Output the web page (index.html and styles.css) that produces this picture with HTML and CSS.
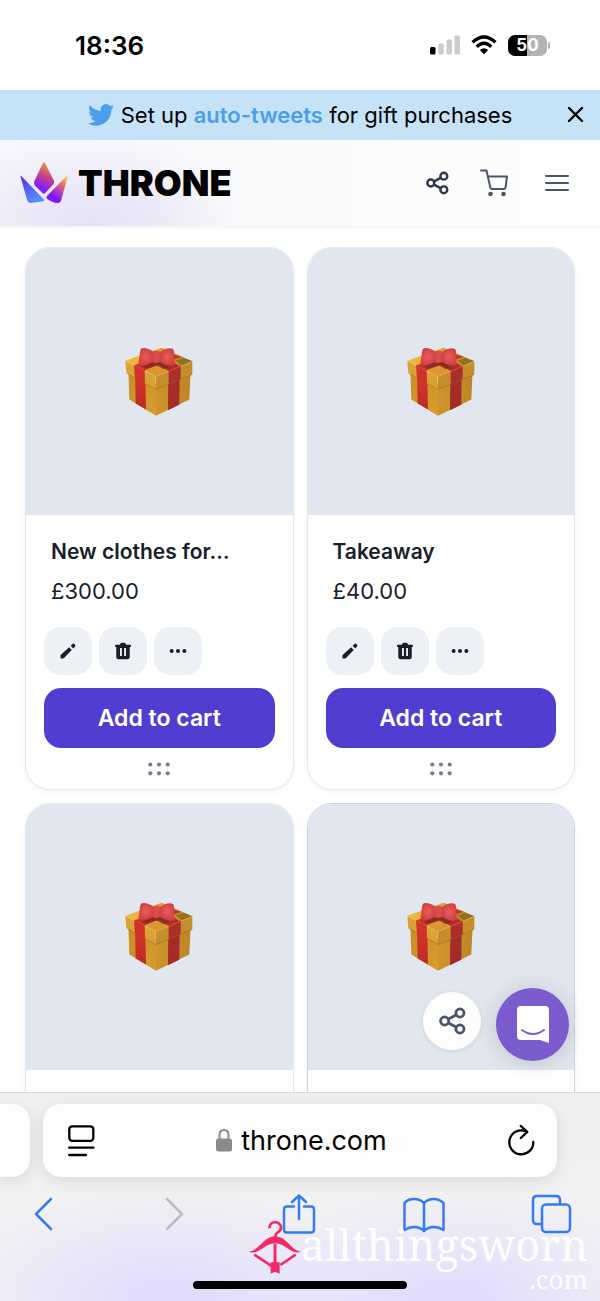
FILE: index.html
```html
<!DOCTYPE html>
<html lang="en">
<head>
<meta charset="utf-8">
<meta name="viewport" content="width=device-width, initial-scale=1">
<title>Throne wishlist</title>
<link rel="stylesheet" href="styles.css">
</head>
<body>
<svg class="defs" aria-hidden="true">
  <defs>
    <linearGradient id="goldL" x1="0" y1="0" x2="1" y2="1"><stop offset="0" stop-color="#c58d25"/><stop offset="1" stop-color="#d89d2f"/></linearGradient>
    <linearGradient id="goldR" x1="0" y1="0" x2="1" y2="0"><stop offset="0" stop-color="#cf952b"/><stop offset="1" stop-color="#bd8526"/></linearGradient>
    <linearGradient id="goldTop" x1="0" y1="0" x2="1" y2="0"><stop offset="0" stop-color="#f0bd3c"/><stop offset=".6" stop-color="#dc9a2f"/><stop offset="1" stop-color="#a87a22"/></linearGradient>
    <linearGradient id="redSide" x1="0" y1="0" x2="0" y2="1"><stop offset="0" stop-color="#d9332c"/><stop offset="1" stop-color="#bb2b26"/></linearGradient>
    <radialGradient id="bowRed"><stop offset="0" stop-color="#ea5d58"/><stop offset="1" stop-color="#cf4143"/></radialGradient>
  </defs>
  <symbol id="gift" viewBox="70 52 210 212">
    <path d="M83 122 L166 166 V261 L86 212 Z" fill="url(#goldL)"/>
    <path d="M166 166 L270 124 L266 212 L166 261 Z" fill="url(#goldR)"/>
    <path d="M103 134 L134 150 L136 242 L105 224 Z" fill="url(#redSide)"/>
    <path d="M203 150 L237 134 L236 228 L202 244 Z" fill="#a32c28"/>
    <path d="M74 96 L183 57 L275 97 L166 143 Z" fill="url(#goldTop)"/>
    <path d="M100 110 L200 72 L242 84 L131 125 Z" fill="#c92f2b"/>
    <path d="M140 82 L175 72 L238 113 L204 127 Z" fill="#a92d29"/>
    <path d="M131 125 L168 111 L204 127 L166 143 Z" fill="#dc952f"/>
    <path d="M224 94 L250 88 L275 97 L245 111 Z" fill="#8f7123"/>
    <path d="M74 97 L132 127 L165 143 V182 L77 132 Z" fill="#daa133"/>
    <path d="M166 143 L275 98 V137 L166 182 Z" fill="#c58d2b"/>
    <path d="M100 110 L132 126 L133 164 L103 149 Z" fill="#d2302b"/>
    <path d="M204 127 L240 112 V151 L204 166 Z" fill="#aa2e2a"/>
    <path d="M76 97 L166 143 L274 98" fill="none" stroke="#e9b63c" stroke-width="2"/>
    <path d="M100 110 L132 126 M204 127 L240 112" stroke="#d43a33" stroke-width="4"/>
    <path d="M77 133 L166 182 L273 138" fill="none" stroke="#855e1c" stroke-width="2" opacity=".6"/>
    <path d="M148 102 L178 102 L204 114 L190 121 L168 109 L136 120 L124 114 Z" fill="#812825" opacity=".8"/>
    <path d="M158 68 C145 59 128 54 121 60 C116 70 118 80 113 106 C126 111 144 108 158 97 Z" fill="url(#bowRed)"/>
    <path d="M177 70 C192 60 207 55 218 61 C223 73 219 86 223 108 C213 114 192 108 177 98 Z" fill="url(#bowRed)"/>
    <rect x="153" y="66" width="29" height="36" rx="13" fill="#dc4c4b"/>
    <path d="M157 74 V94 M178 74 V94" stroke="#b93a3b" stroke-width="2" stroke-linecap="round"/>
  </symbol>
  <symbol id="share" viewBox="0 0 24 24">
    <g fill="none" stroke="currentColor" stroke-width="2.500"><circle cx="5" cy="12" r="3.600"/><circle cx="18.600" cy="4.900" r="3.600"/><circle cx="18.600" cy="19.100" r="3.600"/><path d="M8.400 10.300 L15.200 6.700 M8.400 13.700 L15.200 17.300"/></g>
  </symbol>
  <symbol id="pencil" viewBox="0 0 24 24"><path fill="currentColor" d="M2 18 Q2 17.500 2.500 17 L13.500 7 L17 10.500 L7 21 Q6.500 22 5.500 22 H2 Z M15.500 5 L18 2.500 Q19.300 1.500 20.500 2.700 L21.300 3.500 Q22.500 4.700 21.500 6 L19 8.500 Z"/></symbol>
  <symbol id="trash" viewBox="0 0 24 24"><path fill="currentColor" fill-rule="evenodd" d="M1.500 3.500 H7.500 L9.500 1 H14.500 L16.500 3.500 H22.500 V6.500 H21 V20 Q21 23 18 23 H6 Q3 23 3 20 V6.500 H1.500 Z M8 8 V18.500 H10.500 V8 Z M13.500 8 V18.500 H16 V8 Z"/></symbol>
  <symbol id="more" viewBox="0 0 24 24"><g fill="currentColor"><circle cx="3.500" cy="12" r="2.700"/><circle cx="12" cy="12" r="2.700"/><circle cx="20.500" cy="12" r="2.700"/></g></symbol>
  <symbol id="grip" viewBox="0 0 22 14"><g fill="currentColor"><circle cx="2.300" cy="2.500" r="2.100"/><circle cx="11" cy="2.500" r="2.100"/><circle cx="19.700" cy="2.500" r="2.100"/><circle cx="2.300" cy="11.300" r="2.100"/><circle cx="11" cy="11.300" r="2.100"/><circle cx="19.700" cy="11.300" r="2.100"/></g></symbol>
</svg>

<div class="status">
  <span class="time">18:36</span>
  <div class="indicators">
    <svg width="30" height="20" viewBox="0 0 30 20"><rect y="12" width="5.500" height="7.500" rx="1.500"/><g fill="#ccc"><rect x="8.300" y="8.500" width="5.500" height="11" rx="1.500"/><rect x="16.500" y="4.500" width="5.500" height="15" rx="1.500"/><rect x="24.500" y="0.500" width="5.500" height="19" rx="1.500"/></g></svg>
    <svg width="26" height="20" viewBox="0 0 26 20"><g fill="none" stroke="#000" stroke-width="3.300"><path d="M1.500 7.300 Q13 -3.300 24.500 7.300"/><path d="M5.700 11.700 Q13 5 20.300 11.700"/></g><path d="M8.800 15 Q13 11.600 17.200 15 L13 19.300 Z"/></svg>
    <div class="battery"><span class="cell">50</span><i class="tip"></i></div>
  </div>
</div>

<div class="banner">
  <svg class="bird" viewBox="0 0 24 20" aria-hidden="true"><path fill="#4a9fec" d="M24 2.400c-.9.400-1.800.7-2.800.8 1-.6 1.800-1.600 2.200-2.700-1 .6-2 1-3.100 1.200A4.900 4.900 0 0 0 11.900 6.200C7.700 6 4.100 4 1.700 1 .4 3.200 1 6.100 3.200 7.600c-.8 0-1.600-.2-2.200-.6 0 2.300 1.600 4.400 3.900 4.900-.7.200-1.500.2-2.200.1.600 2 2.400 3.400 4.600 3.400A9.900 9.900 0 0 1 0 17.500 14 14 0 0 0 21.500 5c1-.7 1.800-1.600 2.500-2.600z"/></svg>
  <p class="banner-text">Set up <a href="#">auto-tweets</a> for gift purchases</p>
  <button class="banner-close" aria-label="Close"><svg width="17" height="17" viewBox="0 0 17 17"><path d="M2 2 L15 15 M15 2 L2 15" stroke="#000" stroke-width="2.400" stroke-linecap="round"/></svg></button>
</div>

<header class="header">
  <a class="brand" href="#">
    <svg width="48" height="42" viewBox="0 0 144 126" aria-hidden="true">
      <defs>
        <linearGradient id="c1" x1="0" y1="0" x2=".5" y2="1"><stop offset="0" stop-color="#5a29f2"/><stop offset="1" stop-color="#5590ff"/></linearGradient>
        <linearGradient id="c2" x1=".6" y1="0" x2=".3" y2="1"><stop offset="0" stop-color="#ee9a3c"/><stop offset=".45" stop-color="#c23e91"/><stop offset=".8" stop-color="#8422fa"/></linearGradient>
        <linearGradient id="c3" x1="1" y1="0" x2=".4" y2="1"><stop offset="0" stop-color="#ffe044"/><stop offset=".4" stop-color="#dc6680"/><stop offset=".85" stop-color="#7c18ff"/></linearGradient>
      </defs>
      <path fill="url(#c1)" d="M1 42 Q1 40 4 42 L71 112 Q75 117 69 118 L34 123 Q25 124 22 116 Z"/>
      <path fill="url(#c2)" d="M69 3 Q72 0 75 3 L102 56 Q104 62 100 67 L76 93 Q72 97 67 93 L44 70 Q40 65 43 58 Z"/>
      <path fill="url(#c3)" d="M142 40 Q144 40 143 45 L123 116 Q120 124 112 123 Q97 122 81 110 Q77 106 81 102 Z"/>
    </svg>
    <span class="wordmark">THRONE</span>
  </a>
  <nav class="header-actions">
    <button aria-label="Share"><svg class="dark" width="23" height="24"><use href="#share"/></svg></button>
    <button aria-label="Cart"><svg width="28" height="28" viewBox="0 0 28 28"><path d="M1 1.500 H6.500 L10.300 18.500 Q10.600 20 12 20 H24 Q25.300 20 25.500 18.700 L27 7.500 H8" fill="none" stroke="currentColor" stroke-width="2" stroke-linejoin="round" stroke-linecap="round"/><circle cx="10.500" cy="25" r="2.300" fill="currentColor"/><circle cx="23.500" cy="25" r="2.300" fill="currentColor"/></svg></button>
    <button aria-label="Menu"><svg width="24" height="18" viewBox="0 0 24 18"><path d="M1 2 H23 M1 9 H23 M1 16 H23" stroke="currentColor" stroke-width="2" stroke-linecap="round"/></svg></button>
  </nav>
</header>

<main class="products">
  <article class="card">
    <div class="thumb"><svg><use href="#gift"/></svg></div>
    <div class="card-body">
      <h2>New clothes for…</h2>
      <p class="price">£300.00</p>
      <div class="tools">
        <button aria-label="Edit"><svg><use href="#pencil"/></svg></button>
        <button aria-label="Delete"><svg><use href="#trash"/></svg></button>
        <button aria-label="More"><svg><use href="#more"/></svg></button>
      </div>
      <button class="add">Add to cart</button>
      <svg class="grip"><use href="#grip"/></svg>
    </div>
  </article>
  <article class="card">
    <div class="thumb"><svg><use href="#gift"/></svg></div>
    <div class="card-body">
      <h2>Takeaway</h2>
      <p class="price">£40.00</p>
      <div class="tools">
        <button aria-label="Edit"><svg><use href="#pencil"/></svg></button>
        <button aria-label="Delete"><svg><use href="#trash"/></svg></button>
        <button aria-label="More"><svg><use href="#more"/></svg></button>
      </div>
      <button class="add">Add to cart</button>
      <svg class="grip"><use href="#grip"/></svg>
    </div>
  </article>
  <article class="card next"><div class="thumb"><svg><use href="#gift"/></svg></div></article>
  <article class="card next active"><div class="thumb"><svg><use href="#gift"/></svg></div></article>
  <div class="floating">
    <button class="float-share" aria-label="Share wishlist"><svg width="27" height="28"><use href="#share"/></svg></button>
    <button class="chat" aria-label="Open chat"><svg width="34" height="38" viewBox="0 0 34 38"><path fill="#fff" d="M5 0 H29 Q33 0 33 4 V37 L24 34 H5 Q1 34 1 30 V4 Q1 0 5 0 Z"/><path d="M6 24 Q17 32 28 24" fill="none" stroke="#7b5bcd" stroke-width="2" stroke-linecap="round"/></svg></button>
  </div>
</main>

<footer class="browser">
  <div class="tabs">
    <div class="tab-prev"></div>
    <div class="address">
      <button aria-label="Page settings"><svg width="27" height="32" viewBox="0 0 27 32"><rect x="1.300" y="1.300" width="24" height="14.500" rx="3" fill="none" stroke="#000" stroke-width="2.300"/><path d="M1.200 22.700 H25.500 M1.200 30 H18" stroke="#000" stroke-width="2.300" stroke-linecap="round"/></svg></button>
      <div class="site"><svg width="16" height="23" viewBox="0 0 16 23"><rect y="9.500" width="16" height="13" rx="2.500" fill="#8a8a8f"/><path d="M3.500 10 V6 Q3.500 1 8 1 Q12.500 1 12.500 6 V10" fill="none" stroke="#8a8a8f" stroke-width="2"/></svg><span>throne.com</span></div>
      <button aria-label="Reload"><svg width="27" height="33" viewBox="0 0 27 33"><path d="M25.300 18 A12 12 0 1 1 18 7.300 M12.800 2 L19.300 7.800 L12.800 14" fill="none" stroke="#000" stroke-width="2.300" stroke-linecap="round" stroke-linejoin="round"/></svg></button>
    </div>
  </div>
  <div class="toolbar">
    <button aria-label="Back"><svg viewBox="0 0 42 40"><path d="M29 5 L14 20 L29 35"/></svg></button>
    <button aria-label="Forward" disabled><svg viewBox="0 0 42 40"><path d="M18 5 L33 20 L18 35"/></svg></button>
    <button aria-label="Share page"><svg viewBox="0 0 42 40"><path d="M18 12.500 H11 Q8 12.500 8 15.500 V35.500 Q8 38.500 11 38.500 H35 Q38 38.500 38 35.500 V15.500 Q38 12.500 35 12.500 H28 M23 25 V1.500 M16 8 L23 1.500 L30 8"/></svg></button>
    <button aria-label="Bookmarks"><svg viewBox="0 0 42 40"><path d="M21 9 Q17 5 11 5 Q5 5 1.500 9 V36 Q6 33 11 33 Q17 33 21 37 Q25 33 31 33 Q36 33 40.500 36 V9 Q36 5 31 5 Q25 5 21 9 Z M21 9 V36"/></svg></button>
    <button aria-label="Tabs"><svg viewBox="0 0 42 40"><path d="M11 30 H7 Q3 30 3 26 V6 Q3 2 7 2 H26 Q30 2 30 6 V10"/><rect x="12" y="10.500" width="28" height="27.500" rx="4"/></svg></button>
  </div>
  <div class="home"></div>
</footer>

<div class="watermark">
  <svg width="52" height="54" viewBox="0 0 156 162" aria-hidden="true"><g fill="none" stroke="#f42a68"><path d="M62 22 C58 -2 96 -2 96 20 C96 34 79 32 79 44 V55" stroke-width="8"/><path d="M78 68 V135" stroke-width="9"/><path d="M16 101 L70 137 M140 101 L94 132" stroke-width="8"/></g><path fill="#f42a68" d="M0 92 C32 88 42 47 78 46 C115 47 124 88 156 92 C126 104 113 68 78 67 C44 68 29 105 0 92 Z M65 124 H92 V158 L78 152 L65 158 Z"/></svg>
  <div class="mark-text"><span class="mark-name">allthingsworn</span><span class="mark-domain">.com</span></div>
</div>
</body>
</html>
```
FILE: styles.css
```css
* { box-sizing: border-box; }
body {
  margin: 0;
  height: 100vh;
  position: relative;
  display: flex;
  flex-direction: column;
  overflow: hidden;
  background: #fff;
  color: #1a1d2b;
  font-family: Inter, "Liberation Sans", sans-serif;
}
button {
  display: flex;
  align-items: center;
  justify-content: center;
  padding: 0;
  border: 0;
  background: none;
  color: inherit;
  font: inherit;
}
svg { display: block; flex-shrink: 0; }
h2, p { margin: 0; }
.defs { position: absolute; width: 0; height: 0; }

.status {
  flex: none;
  height: 90px;
  padding: 0 50px 0 75px;
  display: flex;
  align-items: center;
  justify-content: space-between;
  color: #000;
}
.time { font-size: 26px; font-weight: 600; }
.indicators { display: flex; align-items: center; gap: 11px; }
.battery { display: flex; align-items: center; gap: 1px; }
.cell {
  width: 39px;
  border-radius: 7px;
  background: linear-gradient(90deg, #000 50%, #b3b3b3 50%);
  color: #fff;
  font-size: 17px;
  line-height: 21px;
  font-weight: 700;
  text-align: center;
}
.tip { width: 2px; height: 7px; border-radius: 0 2px 2px 0; background: #b3b3b3; }

.banner {
  flex: none;
  position: relative;
  height: 50px;
  display: flex;
  align-items: center;
  justify-content: center;
  gap: 7px;
  background: #c5e2f6;
  color: #000;
}
.bird { width: 26px; height: 22px; }
.banner-text { font-size: 22px; line-height: 28px; }
.banner a { color: #4a9fec; font-weight: 600; text-decoration: none; }
.banner-close { position: absolute; right: 16px; top: 16px; }

.header {
  flex: none;
  height: 87px;
  padding: 0 31px 0 20px;
  display: flex;
  align-items: center;
  justify-content: space-between;
  border-bottom: 1px solid #f5f5f6;
  background: radial-gradient(ellipse 150px 90px at 90px 100%, #e7e3f7 0%, #ebe8f8 40%, transparent 100%), linear-gradient(90deg, #f7f6fd, #fafafb 45%, #fefefe);
  box-shadow: 0 1px 3px #0000000d;
}
.brand { display: flex; align-items: center; gap: 10px; color: #000; text-decoration: none; }
.wordmark { font-size: 36px; line-height: 40px; font-weight: 900; }
.header-actions { display: flex; align-items: center; color: #4a5568; gap: 31px; }
.header-actions button:last-child { margin-left: 6px; }
.dark { color: #2d3748; }

.products {
  flex: 1;
  min-height: 0;
  position: relative;
  overflow: hidden;
  padding: 20px 25px 0;
  display: grid;
  grid-template-columns: 1fr 1fr;
  grid-auto-rows: max-content;
  align-content: start;
  gap: 13px;
}
.card {
  border: 1px solid #e2e8f0;
  border-radius: 25px;
  background: #fff;
  box-shadow: 0 2px 5px #0000000d;
  overflow: hidden;
}
.next { height: 542px; }
.active { border-color: #cbd5e0; }
.thumb {
  aspect-ratio: 1;
  display: flex;
  align-items: center;
  justify-content: center;
  background: #e2e7ef;
}
.thumb svg { width: 70px; height: 71px; }
.card-body { padding: 23px 18px 13px; display: flex; flex-direction: column; }
.card h2 { padding-left: 7px; font-size: 21px; line-height: 28px; font-weight: 600; white-space: nowrap; }
.price { margin: 11px 0 22px; padding-left: 7px; font-size: 22px; line-height: 28px; }
.tools { display: flex; gap: 7px; }
.tools button { width: 48px; height: 48px; border-radius: 16px; background: #edf1f6; }
.tools svg { width: 18px; height: 18px; }
.add {
  margin-top: 13px;
  height: 60px;
  border-radius: 17px;
  background: #523dd1;
  color: #fff;
  font-size: 23px;
  font-weight: 600;
}
.grip { width: 22px; height: 14px; margin: 14px auto 0; color: #718096; }

.floating { position: absolute; right: 31px; bottom: 31px; display: flex; align-items: flex-start; gap: 15px; }
.float-share { width: 58px; height: 58px; margin-top: 4px; border-radius: 50%; background: #fdfdfd; color: #4a5568; box-shadow: 0 1px 5px #0000001a; }
.chat { width: 73px; height: 73px; border-radius: 50%; background: #7b5bcd; box-shadow: 0 2px 22px #00000029; }

.browser {
  flex: none;
  border-top: 1px solid #d9d9db;
  padding: 11px 0 12px;
  background: radial-gradient(ellipse 230px 110px at 170px 100%, #e0dcfd 10%, transparent), radial-gradient(ellipse 220px 110px at 450px 100%, #e0dcfd 10%, transparent), linear-gradient(#f0f0f0, #f3f3f6);
}
.tabs { display: flex; gap: 13px; padding-right: 43px; }
.tab-prev { width: 30px; border-radius: 0 18px 18px 0; background: #fdfdfd; box-shadow: 0 4px 16px #0000001a; }
.address {
  flex: 1;
  height: 73px;
  padding: 0 22px 0 25px;
  display: flex;
  align-items: center;
  justify-content: space-between;
  border-radius: 18px;
  background: #fdfdfd;
  box-shadow: 0 4px 16px #0000001a;
  color: #000;
}
.site { display: flex; align-items: center; gap: 9px; font-size: 27px; line-height: 34px; }
.toolbar { display: flex; justify-content: space-between; padding: 17px 28px 0 22px; }
.toolbar svg { width: 42px; height: 40px; fill: none; stroke: #347cf6; stroke-width: 2.500; stroke-linecap: round; stroke-linejoin: round; }
.toolbar button:disabled svg { stroke: #bdbdc1; }
.home { width: 214px; height: 8px; margin: 47px auto 0; border-radius: 4px; background: #000; }

.watermark { position: absolute; right: 12px; bottom: 12px; display: flex; align-items: flex-start; pointer-events: none; }
.mark-text { display: flex; flex-direction: column; align-items: flex-end; color: #fffffff0; font-family: "Noto Serif", "DejaVu Serif", serif; }
.mark-name { font-size: 43px; line-height: 48px; }
.mark-domain { font-size: 26px; line-height: 20px; }
```
